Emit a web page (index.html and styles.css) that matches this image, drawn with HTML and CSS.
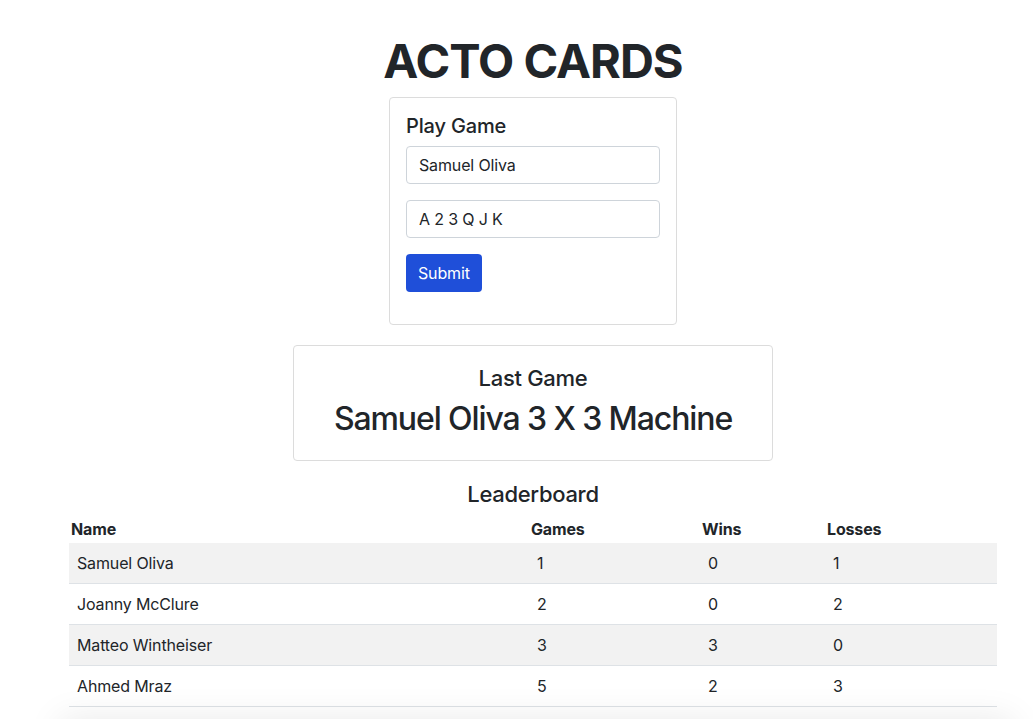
FILE: index.html
```html
<!DOCTYPE html>
<html lang="en">
<head>
<meta charset="utf-8">
<title>Acto Cards</title>
<link rel="stylesheet" href="styles.css">
</head>
<body>
<main class="page">
  <h1 class="title">ACTO CARDS</h1>
  <section class="card play-card">
    <h5 class="card-title">Play Game</h5>
    <form class="play-form">
      <input class="field" type="text" value="Samuel Oliva">
      <input class="field" type="text" value="A 2 3 Q J K">
      <button class="btn" type="button">Submit</button>
    </form>
  </section>
  <section class="card last-card">
    <h4 class="last-title">Last Game</h4>
    <div class="last-result">Samuel Oliva 3 X 3 Machine</div>
  </section>
  <h4 class="board-title">Leaderboard</h4>
  <table class="board">
    <colgroup>
      <col class="c-name"><col class="c-games"><col class="c-wins"><col class="c-losses">
    </colgroup>
    <thead>
      <tr><th>Name</th><th>Games</th><th>Wins</th><th>Losses</th></tr>
    </thead>
    <tbody>
      <tr><td>Samuel Oliva</td><td>1</td><td>0</td><td>1</td></tr>
      <tr><td>Joanny McClure</td><td>2</td><td>0</td><td>2</td></tr>
      <tr><td>Matteo Wintheiser</td><td>3</td><td>3</td><td>0</td></tr>
      <tr><td>Ahmed Mraz</td><td>5</td><td>2</td><td>3</td></tr>
    </tbody>
  </table>
</main>
<div class="edge-shadow"></div>
</body>
</html>
```
FILE: styles.css
```css
* { box-sizing: border-box; }
html, body { margin: 0; background: #fff; }
body {
  font-family: Inter, "Noto Sans", sans-serif;
  color: #212529;
  font-size: 16px;
  line-height: 1.5;
  letter-spacing: -0.15px;
}
.page {
  width: 928px;
  margin-left: 69px;
  display: flex;
  flex-direction: column;
  align-items: center;
}
.title {
  margin: 33px 0 8px;
  font-size: 47px;
  line-height: 56px;
  font-weight: 700;
  letter-spacing: -1px;
}
.card {
  border: 1px solid #dcdcdc;
  border-radius: 4px;
  background: #fff;
}
.play-card {
  width: 288px;
  padding: 16px 16px 32px;
}
.card-title {
  margin: 0 0 8px;
  font-size: 20px;
  line-height: 24px;
  font-weight: 500;
}
.play-form {
  display: flex;
  flex-direction: column;
  align-items: flex-start;
  gap: 16px;
}
.field {
  width: 100%;
  height: 38px;
  padding: 6px 12px;
  border: 1px solid #ced4da;
  border-radius: 4px;
  font: inherit;
  letter-spacing: inherit;
  color: #212529;
}
.btn {
  height: 38px;
  padding: 6px 12px;
  border: 0;
  border-radius: 4px;
  background: #1f4fd9;
  color: #fff;
  font: inherit;
  letter-spacing: inherit;
}
.last-card {
  width: 480px;
  margin-top: 20px;
  padding: 19px 16px 22px;
  text-align: center;
}
.last-title {
  margin: 0;
  font-size: 22px;
  line-height: 27px;
  font-weight: 500;
  letter-spacing: -0.3px;
}
.last-result {
  margin-top: 8px;
  font-size: 32px;
  line-height: 38px;
  font-weight: 500;
  letter-spacing: -1.1px;
}
.board-title {
  margin: 20px 0 7px;
  font-size: 22px;
  line-height: 27px;
  font-weight: 500;
  letter-spacing: -0.3px;
}
.board {
  width: 928px;
  table-layout: fixed;
  border-collapse: collapse;
}
.c-name { width: 460px; }
.c-games { width: 171px; }
.c-wins { width: 125px; }
.c-losses { width: 172px; }
.board th {
  text-align: left;
  font-weight: 700;
  padding: 2px 2px;
  line-height: 24px;
}
.board td {
  padding: 8px;
  line-height: 24px;
  border-bottom: 1px solid #dee2e6;
}
.board tbody tr:nth-child(odd) td { background: #f2f2f2; }
.edge-shadow {
  position: fixed;
  left: 60px;
  right: 20px;
  bottom: -40px;
  height: 40px;
  box-shadow: 0 0 36px rgba(0, 0, 0, 0.09);
  pointer-events: none;
}
```
